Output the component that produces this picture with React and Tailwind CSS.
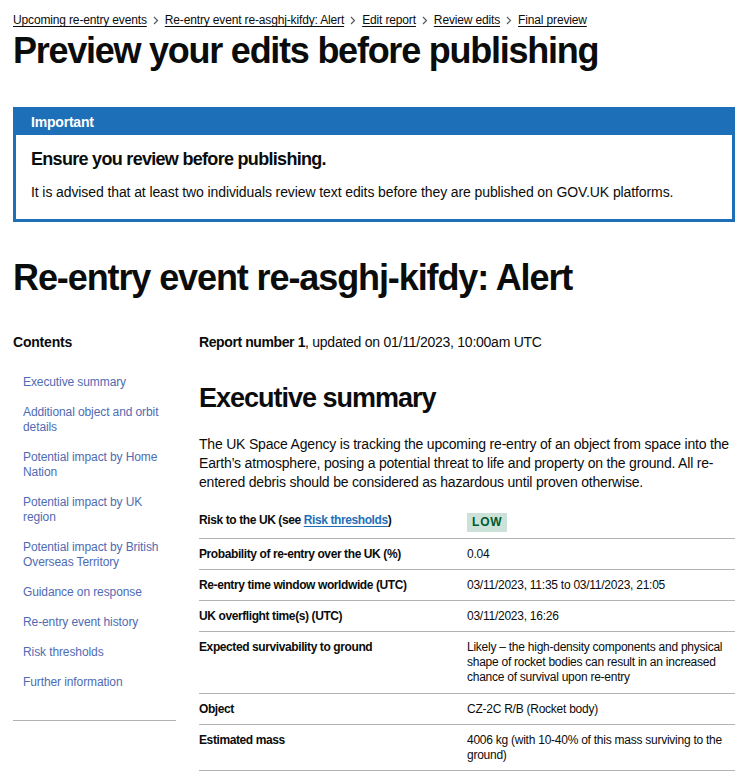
import React from "react";

const crumbs = [
  "Upcoming re-entry events",
  "Re-entry event re-asghj-kifdy: Alert",
  "Edit report",
  "Review edits",
  "Final preview",
];

const contents = [
  "Executive summary",
  "Additional object and orbit details",
  "Potential impact by Home Nation",
  "Potential impact by UK region",
  "Potential impact by British Overseas Territory",
  "Guidance on response",
  "Re-entry event history",
  "Risk thresholds",
  "Further information",
];

function Chevron() {
  return (
    <svg width="6" height="9" viewBox="0 0 6 9" className="mx-[6px] shrink-0" aria-hidden="true">
      <path d="M1 1 L4.5 4.5 L1 8" fill="none" stroke="#505a5f" strokeWidth="1.2" />
    </svg>
  );
}

function Row({ label, children, first, tall }) {
  const pad = first ? "pt-[8px] pb-[10px]" : tall ? "pt-[8px] pb-[8px]" : "pt-[8px] pb-[7px]";
  const padV = first ? "pt-[8px] pb-[6px]" : tall ? "pt-[8px] pb-[8px]" : "pt-[8px] pb-[7px]";
  return (
    <div className="flex border-b border-[#b1b4b6] text-[12px] leading-[15px]">
      <div className={`w-1/2 pr-[15px] font-bold tracking-[-0.4px] ${pad}`}>{label}</div>
      <div className={`w-1/2 tracking-[-0.25px] ${padV}`}>{children}</div>
    </div>
  );
}

export default function App() {
  return (
    <div
      className="bg-white text-[#0b0c0c] px-[13px] pb-10 min-h-[776px]"
      style={{ fontFamily: '"Liberation Sans", Arial, sans-serif' }}
    >
      <nav className="pt-[13px] flex items-center text-[12px] leading-[15px] tracking-[-0.15px]">
        {crumbs.map((c, i) => (
          <React.Fragment key={c}>
            {i > 0 && <Chevron />}
            <a className="underline underline-offset-[2px] decoration-1 whitespace-nowrap">{c}</a>
          </React.Fragment>
        ))}
      </nav>

      <h1 className="mt-[3px] text-[36px] leading-[40px] font-bold tracking-[-1.25px]">
        Preview your edits before publishing
      </h1>

      <div className="mt-[36px] border-[3px] border-[#1d70b8]">
        <div className="bg-[#1d70b8] text-white font-bold text-[14px] leading-[18px] px-[15px] pt-[3px] pb-[4px] tracking-[-0.2px]">
          Important
        </div>
        <div className="px-[15px] pt-[13px] pb-[17px]">
          <p className="font-bold text-[18px] leading-[22px] tracking-[-0.7px]">Ensure you review before publishing.</p>
          <p className="mt-[13px] text-[14px] leading-[19px] tracking-[-0.1px]">
            It is advised that at least two individuals review text edits before they are published on GOV.UK platforms.
          </p>
        </div>
      </div>

      <h2 className="mt-[36px] text-[36px] leading-[40px] font-bold tracking-[-1.1px]">
        Re-entry event re-asghj-kifdy: Alert
      </h2>

      <div className="mt-[35px] flex gap-[23px]">
        <aside className="w-[163px] shrink-0">
          <h3 className="font-bold text-[14px] leading-[18px] tracking-[-0.2px]">Contents</h3>
          <ul className="mt-[24px] pl-[10px] pb-[30px] border-b border-[#b1b4b6] flex flex-col gap-[15px]">
            {contents.map((c) => (
              <li key={c} className="text-[12px] leading-[15px] text-[#4f6bb3] tracking-[-0.1px]">
                {c}
              </li>
            ))}
          </ul>
        </aside>

        <main className="flex-1 min-w-0">
          <p className="text-[14px] leading-[18px] tracking-[-0.25px]">
            <span className="font-bold tracking-[-0.4px]">Report number 1</span>, updated on 01/11/2023, 10:00am UTC
          </p>
          <h2 className="mt-[31px] text-[27px] leading-[32px] font-bold tracking-[-1px]">Executive summary</h2>
          <p className="mt-[21px] text-[14px] leading-[19px] tracking-[-0.2px]">
            The UK Space Agency is tracking the upcoming re-entry of an object from space into the Earth’s atmosphere,
            posing a potential threat to life and property on the ground. All re-entered debris should be considered as
            hazardous until proven otherwise.
          </p>

          <div className="mt-[13px]">
            <Row
              label={
                <>
                  Risk to the UK (see{" "}
                  <a className="text-[#1d70b8] underline underline-offset-[2px]">Risk thresholds</a>)
                </>
              }
              first
            >
              <span className="inline-block bg-[#cce2d8] text-[#005a30] font-bold text-[12px] leading-[15px] tracking-[0.8px] px-[5px] pt-[2px] pb-[2px]">
                LOW
              </span>
            </Row>
            <Row label="Probability of re-entry over the UK (%)">0.04</Row>
            <Row label="Re-entry time window worldwide (UTC)">03/11/2023, 11:35 to 03/11/2023, 21:05</Row>
            <Row label="UK overflight time(s) (UTC)">03/11/2023, 16:26</Row>
            <Row label="Expected survivability to ground" tall>
              Likely – the high-density components and physical shape of rocket bodies can result in an increased chance of
              survival upon re-entry
            </Row>
            <Row label="Object">CZ-2C R/B (Rocket body)</Row>
            <Row label="Estimated mass">4006 kg (with 10-40% of this mass surviving to the ground)</Row>
          </div>
        </main>
      </div>
    </div>
  );
}
